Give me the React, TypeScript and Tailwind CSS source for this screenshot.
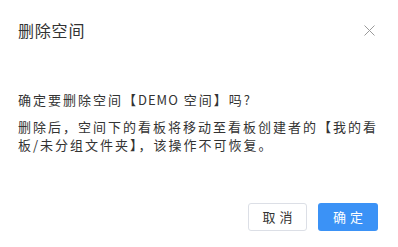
export default function App() {
  return (
    <div
      className="h-[247px] w-[398px] overflow-hidden bg-white text-[#333]"
      style={{ fontFamily: '"Noto Sans CJK SC", "Noto Sans", sans-serif' }}
    >
      <div className="flex items-center justify-between pl-[18px] pr-[23px] pt-[20px]">
        <h2 className="text-[16px] leading-[20px] tracking-[0.8px] text-[#333]">删除空间</h2>
        <button type="button" aria-label="关闭" className="flex h-[12px] w-[12px] items-center justify-center">
          <svg width="11" height="11" viewBox="0 0 11 11" fill="none" stroke="#9a9a9a" strokeWidth="1">
            <path d="M0.5 0.5 L10.5 10.5 M10.5 0.5 L0.5 10.5" />
          </svg>
        </button>
      </div>

      <div className="mt-[51px] px-[18px] text-[13px] leading-[18px] tracking-[2px] text-[#333]">
        <p>
          确定要删除空间【<span className="tracking-[1px]">DEMO</span> 空间】吗?
        </p>
        <p className="mt-[9px]">
          删除后，空间下的看板将移动至看板创建者的【我的看板/未分组文件夹】，该操作不可恢复。
        </p>
      </div>

      <div className="mt-[49px] flex justify-end gap-[11px] pr-[20px]">
        <button
          type="button"
          className="h-[28px] w-[59px] rounded-[3px] border border-[#dcdfe6] bg-white pl-[4px] text-[13px] tracking-[4px] text-[#333]"
        >
          取消
        </button>
        <button
          type="button"
          className="h-[28px] w-[60px] rounded-[3px] bg-[#3b92f6] pl-[4px] text-[13px] tracking-[4px] text-white"
        >
          确定
        </button>
      </div>
    </div>
  );
}
